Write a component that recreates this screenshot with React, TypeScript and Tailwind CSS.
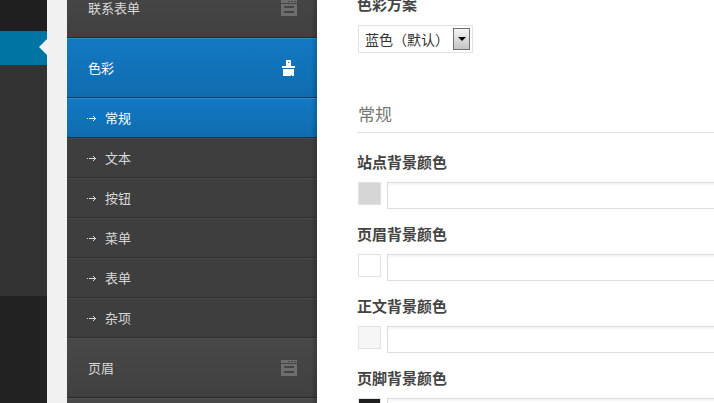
const font = '"Noto Sans CJK SC", "Liberation Sans", sans-serif';

function FormIcon() {
  return (
    <svg width="16" height="16" viewBox="0 0 16 16" className="shrink-0" shapeRendering="crispEdges">
      <path fill="#6e6e6e" d="M0 0h16v3H0z" />
      <path fill="#444" d="M7 1h2v1H7zM10 1h2v1h-2zM13 1h2v1h-2z" />
      <path fill="#6e6e6e" d="M0 4h16v12H0z" />
      <path fill="#444" d="M3 6h10v2H3zM3 11h10v2H3z" />
    </svg>
  );
}

function BrushIcon() {
  return (
    <svg width="13" height="16" viewBox="0 0 13 16" className="shrink-0" shapeRendering="crispEdges">
      <path fill="#fff" d="M4 0h5v6H4zM0 6h13v2H0zM1 9h11v7H1z" />
      <path fill="#1272b8" d="M6 2h1v1H6zM9 15h1v1H9z" />
    </svg>
  );
}

function Arrow({ color }: { color: string }) {
  return (
    <svg width="9" height="7" viewBox="0 0 9 7" className="shrink-0" shapeRendering="crispEdges">
      <path fill={color} d="M0 3h1v1H0zM2 3h7v1H2zM6 1h1v1H6zM7 2h1v1H7zM7 4h1v1H7zM6 5h1v1H6z" />
    </svg>
  );
}

function SectionRow({ label, active }: { label: string; active?: boolean }) {
  return (
    <div
      className={
        active
          ? "flex h-[60px] shrink-0 items-center justify-between border-t border-b border-t-[#2a8ad0] border-b-[#0c3a5c] bg-gradient-to-b from-[#1379c3] to-[#0f6cae] pl-[21px] pr-[22px] text-white"
          : "flex h-[60px] shrink-0 items-center justify-between border-t border-b border-t-[#505050] border-b-[#2b2b2b] bg-gradient-to-b from-[#484848] to-[#404040] pl-[21px] pr-[20px] text-[#d8d8d8]"
      }
    >
      <span className="pb-[2px] text-[13px] leading-none">{label}</span>
      {active ? <BrushIcon /> : <FormIcon />}
    </div>
  );
}

function SubRow({ label, active }: { label: string; active?: boolean }) {
  return (
    <div
      className={
        active
          ? "flex h-10 shrink-0 items-center gap-[9px] border-t border-b border-t-[#2a8ad0] border-b-[#14344c] bg-gradient-to-b from-[#1379c3] to-[#0f6cae] pl-5 text-white"
          : "flex h-10 shrink-0 items-center gap-[9px] border-t border-b border-t-[#4a4a4a] border-b-[#303030] bg-[#3e3e3e] pl-5 text-[#d8d8d8]"
      }
    >
      <Arrow color={active ? "#ffffff" : "#d8d8d8"} />
      <span className="pb-[2px] text-[13px] leading-none">{label}</span>
    </div>
  );
}

function ColorField({ label, color }: { label: string; color: string }) {
  return (
    <div className="mb-[15px] flex h-[57px] flex-col">
      <div className="h-[20px] text-[15px] font-bold leading-[20px] text-[#444444]">{label}</div>
      <div className="mt-[10px] flex items-start gap-[6px]">
        <div className="ml-px h-[23px] w-[23px] shrink-0 border border-[#e2e2e2]" style={{ backgroundColor: color }} />
        <div className="h-[27px] w-[500px] shrink-0 border border-[#dddddd] bg-white shadow-[inset_0_2px_2px_rgba(0,0,0,0.04)]" />
      </div>
    </div>
  );
}

export default function App() {
  return (
    <div className="flex h-[403px] w-[714px] overflow-hidden bg-white" style={{ fontFamily: font }}>
      <aside className="flex w-[47px] shrink-0 flex-col bg-[#333333]">
        <div className="h-[31px] shrink-0 bg-[#1f1f1f]" />
        <div className="relative h-[34px] shrink-0 bg-[#0074a2]">
          <div className="absolute right-0 top-[8px] h-0 w-0 border-y-[8px] border-r-[8px] border-y-transparent border-r-[#f1f1f1]" />
        </div>
        <div className="flex-1" />
        <div className="h-[107px] shrink-0 bg-[#222222]" />
      </aside>

      <div className="w-5 shrink-0 bg-[#f1f1f1]" />

      <nav className="relative -mt-[22px] flex h-[425px] w-[250px] shrink-0 flex-col overflow-hidden">
        <SectionRow label="联系表单" />
        <SectionRow label="色彩" active />
        <SubRow label="常规" active />
        <SubRow label="文本" />
        <SubRow label="按钮" />
        <SubRow label="菜单" />
        <SubRow label="表单" />
        <SubRow label="杂项" />
        <SectionRow label="页眉" />
        <SectionRow label="" />
        <div className="pointer-events-none absolute inset-y-0 right-0 w-[6px] bg-gradient-to-r from-transparent to-[rgba(0,0,0,0.18)]" />
      </nav>

      <main className="-mt-[6px] min-w-0 flex-1 pl-10">
        <div className="h-[20px] text-[15px] font-bold leading-[20px] text-[#444444]">色彩方案</div>
        <div className="ml-px mt-[11px] flex h-[28px] w-[115px] items-center justify-between border border-[#e2e2e2] pl-[6px] pr-[2px]">
          <span className="text-[14px] leading-none text-[#333333]">蓝色（默认）</span>
          <span className="flex h-[22px] w-[17px] shrink-0 items-center justify-center border border-[#707070] bg-gradient-to-b from-[#f4f4f4] to-[#c4c4c4]">
            <span className="h-0 w-0 border-x-[4px] border-t-[4px] border-x-transparent border-t-black" />
          </span>
        </div>
        <div className="mt-[43px] flex h-[37px] w-[400px] items-center border-b border-[#e2e2e2] pb-[2px] pl-px text-[17px] leading-none text-[#777777]">
          常规
        </div>
        <div className="mt-[19px]">
          <ColorField label="站点背景颜色" color="#d6d6d6" />
          <ColorField label="页眉背景颜色" color="#ffffff" />
          <ColorField label="正文背景颜色" color="#f6f6f6" />
          <ColorField label="页脚背景颜色" color="#1f1f1f" />
        </div>
      </main>
    </div>
  );
}
